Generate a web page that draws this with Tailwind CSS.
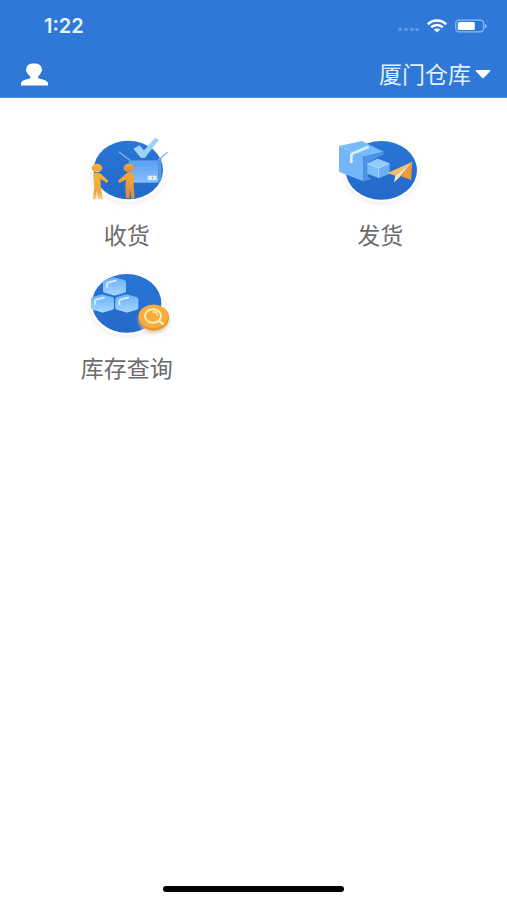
<!DOCTYPE html>
<html lang="zh-CN">
<head>
    <meta charset="UTF-8">
    <meta name="viewport" content="width=device-width, initial-scale=1.0">
    <title>厦门仓库</title>
    <script src="https://cdn.jsdelivr.net/npm/@tailwindcss/browser@4"></script>
</head>
<body class="min-h-screen flex flex-col bg-white font-['Liberation_Sans','Noto_Sans_CJK_SC',sans-serif]">
    <header class="bg-[#2f78d7] text-white border-b border-[#5b93de]">
        <!-- Status bar -->
        <div class="flex items-center justify-between h-[52px] pl-11 pr-5">
            <span class="text-xl font-semibold text-[#e6f6ff] font-['Inter',sans-serif]">1:22</span>
            <div class="flex items-center gap-2">
                <svg class="w-6 h-4" viewBox="0 0 24 16" fill="#5b97e3">
                    <rect x="3" y="10" width="4" height="3" rx="1"/>
                    <rect x="9" y="10" width="4" height="3" rx="1"/>
                    <rect x="15" y="10" width="4" height="3" rx="1"/>
                    <rect x="20" y="10" width="4" height="3" rx="1"/>
                </svg>
                <svg class="w-5 h-4" viewBox="0 0 20 16" fill="none" stroke="#fff" stroke-width="2.6">
                    <path d="M.8 6.2C6 1.200 14 1.200 19.200 6.200"/>
                    <path d="M4.200 9.300c3.300-3 8.300-3 11.600 0"/>
                    <path d="M6.800 11.600c1.900-1.600 4.500-1.600 6.400 0L10 14.600z" fill="#fff" stroke="none"/>
                </svg>
                <svg class="w-8 h-4" viewBox="0 0 32 16">
                    <rect x=".7" y="2.200" width="28" height="11.600" rx="3.500" fill="none" stroke="#8dbcf0" stroke-width="1.300"/>
                    <rect x="2.800" y="4" width="17" height="8" rx="1.500" fill="#fff"/>
                    <path d="M30 6c2.400.6 2.400 3.400 0 4z" fill="#8dbcf0"/>
                </svg>
            </div>
        </div>

        <!-- Navigation bar -->
        <div class="flex items-center justify-between h-[45px] pl-5 pr-4">
            <button type="button" aria-label="我的">
                <svg class="w-7 h-6" viewBox="0 0 28 24" fill="#fff">
                    <path d="M14 .5c5 0 7.800 2 7.500 5.200.8.600.8 2.800-.4 3.400-.5 2.200-1.600 3.300-2.900 4.200v1.600c1.500 1.500 9.100 1.200 9.800 5.200v2.400H1v-2.400c.7-4 7.800-3.700 9.300-5.200v-1.600C8.800 12.400 7.500 11.300 6.900 9.100c-1.200-.6-1.200-2.800-.4-3.400C6.200 2.500 9 .5 14 .5z"/>
                </svg>
            </button>
            <div class="flex items-center gap-1">
                <select aria-label="仓库" class="appearance-none bg-transparent text-[23px] leading-8 text-[#e3f0ff]">
                    <option>厦门仓库</option>
                </select>
                <svg class="w-4 h-3" viewBox="0 0 16 12" fill="#fff"><path d="M1.500 1h13q1.500 0 .6 1.200L9 8.800q-1 1-2 0L.9 2.200Q0 1 1.500 1z"/></svg>
            </div>
        </div>
    </header>

    <!-- Function entries -->
    <main class="flex-1 grid grid-cols-2 content-start gap-y-[13px] pt-[34px] text-[23px] leading-8 text-[#6b6b6b]">
        <a href="#receive" class="flex flex-col items-center gap-2">
            <svg class="w-24 h-20" viewBox="27 21 288 240">
                <defs>
                    <linearGradient id="disc" x1="0" y1="0" x2="0" y2="1"><stop offset="0" stop-color="#2976d5"/><stop offset="1" stop-color="#2469c9"/></linearGradient>
                    <linearGradient id="carton" x1="0" y1="0" x2="0" y2="1"><stop offset="0" stop-color="#5a9ff0"/><stop offset="1" stop-color="#86c0fb"/></linearGradient>
                    <linearGradient id="gold" x1="0" y1="0" x2="0" y2="1"><stop offset="0" stop-color="#f6b33c"/><stop offset=".75" stop-color="#efa63c"/><stop offset="1" stop-color="#f4d6a0"/></linearGradient>
                    <linearGradient id="amber" x1="0" y1="0" x2="0" y2="1"><stop offset="0" stop-color="#f5a93b"/><stop offset="1" stop-color="#dd8a3e"/></linearGradient>
                    <filter id="soft" x="-20%" y="-20%" width="140%" height="140%"><feGaussianBlur stdDeviation="7"/></filter>
                </defs>
                <ellipse cx="175" cy="146" rx="114" ry="92" fill="#eff0f2" filter="url(#soft)"/>
                <ellipse cx="175" cy="138" rx="112" ry="94" fill="#fdfdfd"/>
                <ellipse cx="175" cy="135" rx="104" ry="88" fill="url(#disc)"/>
                <path d="M147 81l33 25M293 82l-29 24" fill="none" stroke="#7fb6e8" stroke-width="4"/>
                <path d="M176 106h89v67h-89z" fill="url(#carton)"/>
                <path d="M265 106l9-7v65l-9 9z" fill="#5a9be6"/>
                <path d="M233 152h27v13h-27z" fill="#dcefff"/>
                <path d="M248 154v9" stroke="#6aa8ea" stroke-width="2" fill="none"/>
                <path d="M193 72l15-9 14 16 34-38 8 4-40 51-10 1z" fill="#9bd2f8" stroke="#9bd2f8" stroke-width="4"/>
                <g fill="url(#gold)">
                    <ellipse cx="81" cy="129" rx="16" ry="13"/>
                    <path d="M69 146q12-6 24 1l22 20-5 7-18-13v25l7 37H84l-4-28-1 28H68l5-38-2-20z"/>
                </g>
                <g fill="url(#amber)">
                    <ellipse cx="176" cy="129" rx="15" ry="13"/>
                    <path d="M188 145q-14-6-22 3l-22 19 4 7 20-10-2 22 2 34h10l2-29 3 29h11l-3-37 2-25z"/>
                </g>
            </svg>
            <span>收货</span>
        </a>

        <a href="#send" class="flex flex-col items-center gap-2">
            <svg class="w-24 h-20" viewBox="36 21 288 240">
                <ellipse cx="184" cy="146" rx="114" ry="92" fill="#eff0f2" filter="url(#soft)"/>
                <ellipse cx="184" cy="138" rx="112" ry="94" fill="#fdfdfd"/>
                <ellipse cx="184" cy="136" rx="107" ry="88" fill="url(#disc)"/>
                <!-- large carton -->
                <path d="M57 63l68-15 66 32-61 15z" fill="#78bafa"/>
                <path d="M57 63l73 32v74l-73-29z" fill="#74b6f9"/>
                <path d="M130 95l61-15v8l-29 15-19 13v41l13 5-26 7z" fill="#4c94e8"/>
                <path d="M94 114V93q0-6 6-8l46-20" fill="none" stroke="#d9f0ff" stroke-width="8"/>
                <!-- small carton -->
                <path d="M142 116l31-15 35 14v31l-32 13-34-13z" fill="#7dbcfa"/>
                <path d="M142 116l31-15 35 14-32 14z" fill="#91cbff"/>
                <path d="M176 129l32-14v31l-32 13z" fill="#6aaef3"/>
                <path d="M142 116l34 13 32-14M176 129v30" fill="none" stroke="#c5e6ff" stroke-width="2"/>
                <!-- paper plane -->
                <path d="M277 110l-74 34 23 8z" fill="#f9bf62"/>
                <path d="M277 110l-51 42-4 20 15-14z" fill="#ffe6b5"/>
                <path d="M277 110l-4 55-32-12-4 5z" fill="#ed9a37"/>
            </svg>
            <span>发货</span>
        </a>

        <a href="#stock" class="flex flex-col items-center gap-2">
            <svg class="w-24 h-20" viewBox="27 9 288 240">
                <defs>
                    <linearGradient id="cube" x1="0" y1="0" x2="0" y2="1"><stop offset="0" stop-color="#69b1f9"/><stop offset="1" stop-color="#a6d5ff"/></linearGradient>
                    <g id="box">
                        <path d="M-2-27L29-19q5 2 5 7v25q0 4-5 6L4 27q-4 1-8 0l-26-8q-5-2-5-6v-25q0-5 5-7z" fill="url(#cube)"/>
                        <path d="M-23 4v-10q0-5 5-6L6-18" fill="none" stroke="#d9f0ff" stroke-width="5"/>
                    </g>
                </defs>
                <ellipse cx="170" cy="134" rx="114" ry="92" fill="#eff0f2" filter="url(#soft)"/>
                <ellipse cx="170" cy="126" rx="112" ry="94" fill="#fdfdfd"/>
                <ellipse cx="170" cy="124" rx="104" ry="88" fill="url(#disc)"/>
                <use href="#box" x="134" y="73"/>
                <use href="#box" x="98" y="124"/>
                <use href="#box" x="171" y="124"/>
                <ellipse cx="253" cy="175" rx="44" ry="38" fill="#d9c9b5" filter="url(#soft)"/>
                <ellipse cx="251" cy="167" rx="46" ry="39" fill="#e9962b"/>
                <ellipse cx="250" cy="163" rx="44" ry="35" fill="#f7ac3e"/>
                <ellipse cx="249" cy="162" rx="24" ry="20" fill="none" stroke="#ffedb0" stroke-width="6"/>
                <path d="M266 176l13 10" stroke="#ffedb0" stroke-width="7" stroke-linecap="round"/>
                <path d="M248 150q14-1 15 11" fill="none" stroke="#ffedb0" stroke-width="4"/>
            </svg>
            <span>库存查询</span>
        </a>
    </main>

    <!-- Home indicator -->
    <footer class="flex justify-center pb-2">
        <div class="w-[181px] h-[6px] rounded-full bg-black"></div>
    </footer>
</body>
</html>
